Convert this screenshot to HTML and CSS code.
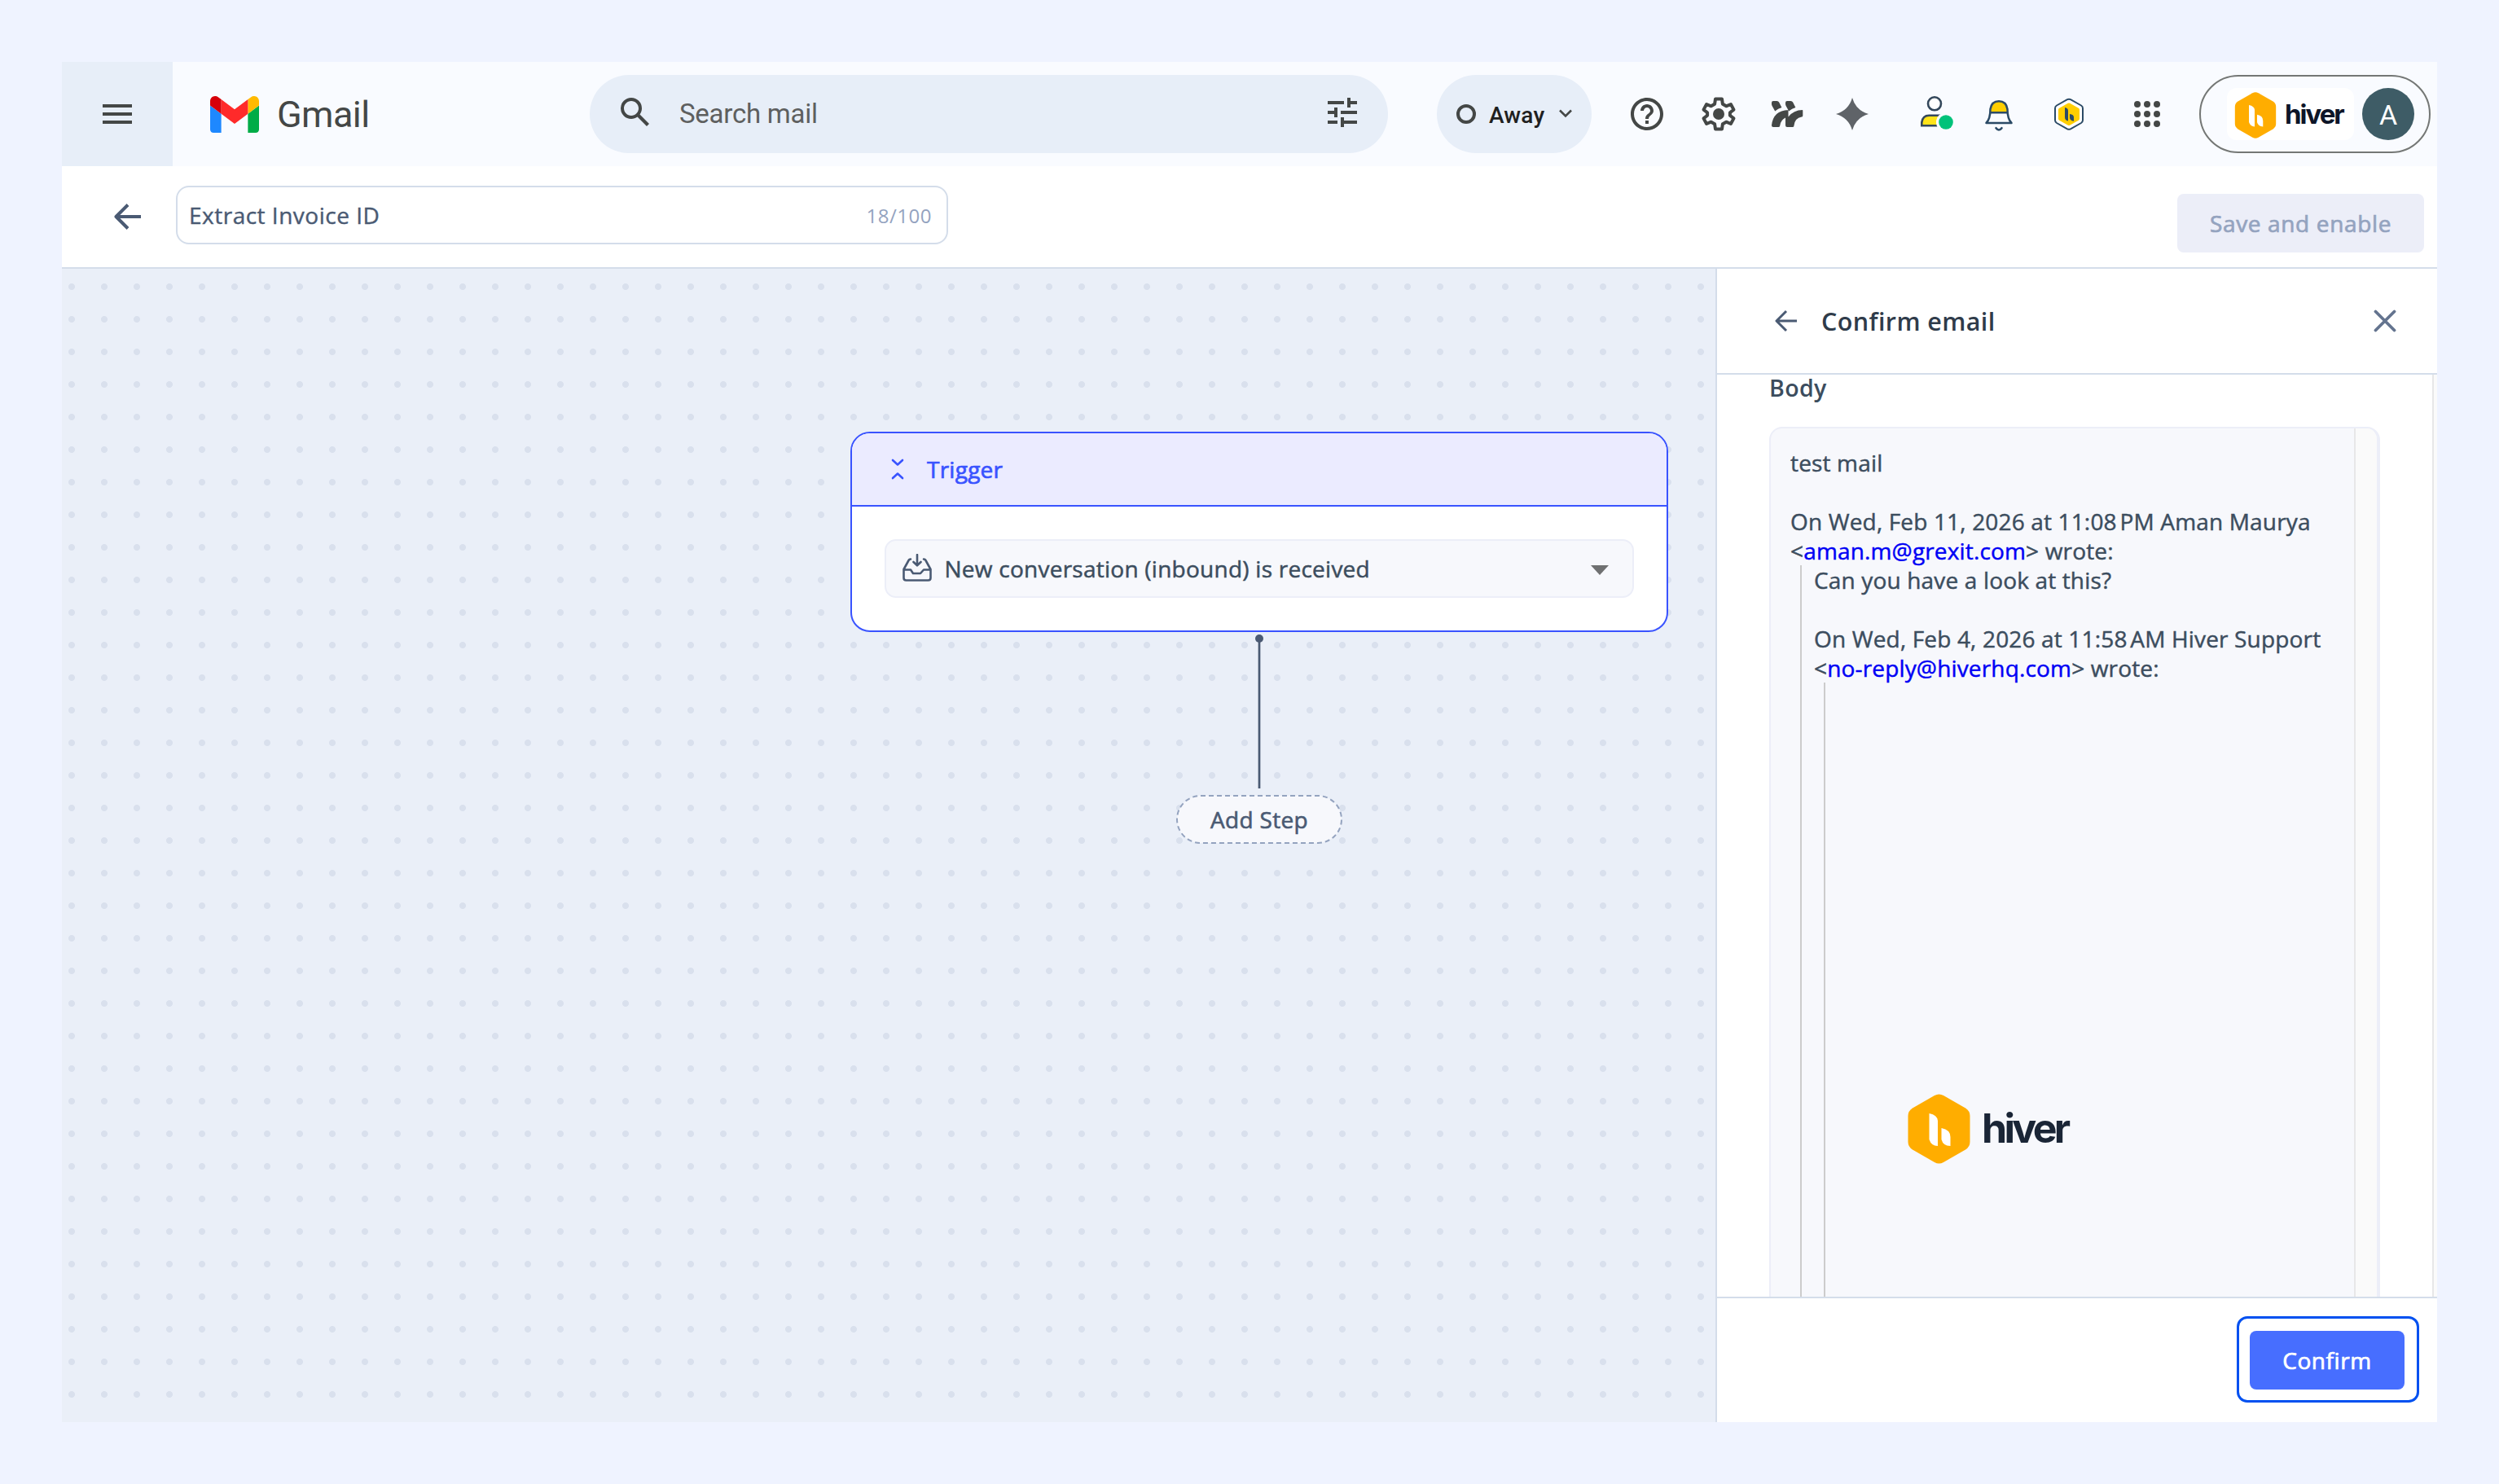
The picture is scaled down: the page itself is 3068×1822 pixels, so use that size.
FILE: index.html
```html
<!DOCTYPE html>
<html lang="en">
<head>
<meta charset="utf-8">
<title>Extract Invoice ID</title>
<link rel="stylesheet" href="styles.css">
</head>
<body>
<div class="window">
  <header class="topbar">
    <button class="menu" aria-label="Main menu"><i></i><i></i><i></i></button>
    <div class="brand">
      <svg class="brand-logo" viewBox="52 42 88 66" preserveAspectRatio="none"><path fill="#1e88ff" d="M58 108h14V74L52 59v43c0 3.32 2.69 6 6 6"/><path fill="#00ac47" d="M120 108h14c3.32 0 6-2.69 6-6V59l-20 15"/><path fill="#ffba00" d="M120 48v26l20-15v-8c0-7.42-8.47-11.65-14.4-7.2"/><path fill="#ff2a2a" d="M72 74V48l24 18 24-18v26L96 92"/><path fill="#d60009" d="M52 51v8l20 15V48l-5.6-4.2c-5.94-4.45-14.4-.22-14.4 7.2"/></svg>
      <span class="brand-name">Gmail</span>
    </div>
    <div class="search">
      <svg class="icon48" viewBox="0 0 24 24"><path d="M20.49 19l-5.73-5.73C15.53 12.2 16 10.91 16 9.5A6.5 6.5 0 1 0 9.5 16c1.41 0 2.7-.47 3.77-1.24L19 20.49 20.49 19zM5 9.5C5 7.01 7.01 5 9.5 5S14 7.01 14 9.5 11.99 14 9.5 14 5 11.99 5 9.5z"/></svg>
      <span class="search-text">Search mail</span>
      <svg class="icon48" viewBox="0 0 24 24"><path d="M3 17v2h6v-2H3zM3 5v2h10V5H3zm10 16v-2h8v-2h-8v-2h-2v6h2zM7 9v2H3v2h4v2h2V9H7zm14 4v-2H11v2h10zm-6-4h2V7h4V5h-4V3h-2v6z"/></svg>
    </div>
    <div class="status">
      <span class="status-ring"></span>
      <span class="status-text">Away</span>
      <svg class="status-caret" viewBox="0 0 18 12"><path d="M2 2.500l7 7 7-7" fill="none" stroke="#444746" stroke-width="2.600"/></svg>
    </div>
    <div class="tools">
      <svg class="icon48 help" viewBox="0 0 24 24"><path d="M11 18h2v-2h-2v2zm1-16C6.480 2 2 6.480 2 12s4.480 10 10 10 10-4.480 10-10S17.520 2 12 2zm0 18c-4.410 0-8-3.590-8-8s3.590-8 8-8 8 3.590 8 8-3.590 8-8 8zm0-14c-2.210 0-4 1.790-4 4h2c0-1.100.9-2 2-2s2 .9 2 2c0 2-3 1.750-3 5h2c0-2.250 3-2.500 3-5 0-2.210-1.790-4-4-4z"/></svg>
      <svg class="icon48 gear" viewBox="0 0 48 48"><path d="M20 5.500h8l.9 6.200 4.400 2.600 5.600-2.300 3.600 6.600-4.600 3.700v3.400l4.600 3.700-3.600 6.600-5.600-2.300-4.400 2.600-.9 6.200h-8l-.9-6.200-4.400-2.600-5.600 2.300-3.600-6.600 4.600-3.700v-3.400L5.500 18.600 9.100 12l5.600 2.300 4.400-2.600z" fill="none" stroke="#444746" stroke-width="4" stroke-linejoin="round"/><circle cx="24" cy="24" r="7"/></svg>
      <svg class="icon48 streams" viewBox="0 0 48 48"><path d="M5 10q0-2 2-2h4.500q1.800 0 2.600 1.600l3.300 6.400q-4.600 1.300-8.200 4.500L5.600 14Q5 12.800 5 11.500zM22 10q0-2 2-2h4.500q1.800 0 2.600 1.600l3.300 6.400q-4.600 1.300-8.200 4.500L22.600 14Q22 12.800 22 11.500zM5 38q2-18.500 20.500-19V27.500Q32 19 43 19q.300 0 .3 1.500v5.500q0 1.500-1.500 1.600-8.300 1.500-9.300 10.500 0 1.900-1.500 1.900h-7q-2 0-2-2v-9.500q-6 3-6.700 9.600 0 1.900-1.800 1.900H7q-2 0-2-2z"/></svg>
      <svg class="icon48 spark" viewBox="0 0 48 48"><path fill="#5f6368" d="M24 4q4.500 15.500 20 20-15.500 4.500-20 20-4.500-15.500-20-20 15.500-4.500 20-20z"/></svg>
      <svg class="icon48 person" viewBox="0 0 48 48"><circle cx="21" cy="11.300" r="8" fill="#fff" stroke="#33475b" stroke-width="2.600"/><path d="M5.300 38.300v-4q1.200-8.500 9-8.500H32v12.500z" fill="#ffe31a" stroke="#33475b" stroke-width="2.600"/><circle cx="35" cy="34" r="12" fill="#f9fbff"/><circle cx="35" cy="34" r="8.800" fill="#00c27a"/></svg>
      <svg class="icon48 bell" viewBox="0 0 48 48"><path d="M13.500 22Q13 8 24 8t10.500 14z" fill="#ffce00"/><path d="M8.500 35q5-5 5-17 1.500-9.800 10.500-9.800T34.500 18q0 12 5 17zM13.500 22.200h21" fill="none" stroke="#2b4a66" stroke-width="2.500" stroke-linejoin="round"/><path d="M20.500 41.200q3.500 4.600 7 0" fill="none" stroke="#2b4a66" stroke-width="2.600" stroke-linecap="round"/></svg>
      <svg class="icon48 hex" viewBox="0 0 48 48"><path d="M22 6.200q2-1 4 0l13 7.300q2 1.200 2 3.500v14.500q0 2.300-2 3.500L26 42.300q-2 1-4 0L9 35q-2-1.200-2-3.500V17q0-2.300 2-3.500z" fill="#fff" stroke="#2b4a66" stroke-width="2"/><path d="M22.800 10.700q1.200-.6 2.400 0l10.600 6q1.200.7 1.200 2v11q0 1.400-1.200 2l-10.600 6q-1.200.6-2.400 0l-10.600-6q-1.200-.6-1.200-2v-11q0-1.400 1.200-2z" fill="#ffce00"/><path d="M19 16q4 .5 4 4v12.500q-4-.8-4-4.500zM25 24q5 .5 5 4v4.800q-5-.8-5-4.500z" fill="#2b4a66"/></svg>
      <svg class="icon48 apps" viewBox="0 0 48 48"><g><circle cx="12" cy="12" r="4"/><circle cx="24" cy="12" r="4"/><circle cx="36" cy="12" r="4"/><circle cx="12" cy="24" r="4"/><circle cx="24" cy="24" r="4"/><circle cx="36" cy="24" r="4"/><circle cx="12" cy="36" r="4"/><circle cx="24" cy="36" r="4"/><circle cx="36" cy="36" r="4"/></g></svg>
    </div>
    <div class="account">
      <div class="org">
        <svg class="org-logo" viewBox="0 0 76 86"><path fill="#ffad00" d="M32.500 2q5.500-3 11 0l27 15.500Q76 21 76 27v32q0 6-5.500 9.500L43.500 84q-5.500 3-11 0l-27-15.500Q0 65 0 59V27q0-6 5.500-9.500z"/><path fill="#fff" d="M26 24q10 2 10.500 9v31q-8 0-10.500-8zM41 42q11 2 11 11v11q-9 0-11-8z"/></svg>
        <span class="org-name">hiver</span>
      </div>
      <span class="avatar">A</span>
    </div>
  </header>

  <div class="titlebar">
    <svg class="back" viewBox="0 0 34 34"><path d="M33 17H3M17 2.500L2.500 17 17 31.500" fill="none" stroke="#4a5a73" stroke-width="4" stroke-linejoin="round"/></svg>
    <div class="name-field"><span class="name-value">Extract Invoice ID</span><span class="name-count">18/100</span></div>
    <button class="save">Save and enable</button>
  </div>

  <div class="workspace">
    <main class="canvas">
      <section class="trigger">
        <div class="trigger-head">
          <svg class="collapse" viewBox="0 0 16 28"><path d="M2 3l6 5.500L14 3M2 25l6-5.500 6 5.500" fill="none" stroke="#3953ff" stroke-width="2.600" stroke-linecap="round" stroke-linejoin="round"/></svg>
          <span>Trigger</span>
        </div>
        <div class="trigger-body">
          <div class="select">
            <svg class="inbox" viewBox="0 0 36 34"><path d="M10 6.500Q8 6.500 7 9L1.500 19v10.500q0 3 3 3h27q3 0 3-3V19L29 9q-1-2.500-3-2.500M1.500 19.500H10l3 4.500h9l4-4.500h8.500M18 1v12M13.500 10l4.500 4.300 4.500-4.300" fill="none" stroke="#4a5a73" stroke-width="2.600" stroke-linecap="round" stroke-linejoin="round"/></svg>
            <span class="select-text">New conversation (inbound) is received</span>
            <i class="select-arrow"></i>
          </div>
        </div>
      </section>
      <svg class="connector" viewBox="0 0 12 190"><circle cx="6" cy="6" r="5" fill="#4a5a73"/><path d="M6 6v184" stroke="#4a5a73" stroke-width="2.700"/></svg>
      <button class="add-step"><svg class="add-outline" viewBox="0 0 204 60"><rect x="1" y="1" width="202" height="58" rx="29" fill="#f7f8fc" stroke="#94a3bf" stroke-width="2" stroke-dasharray="6 4"/></svg><span>Add Step</span></button>
    </main>

    <aside class="panel">
      <div class="panel-head">
        <svg class="panel-back" viewBox="0 0 28 28"><path d="M27 14H2.500M14 2L2 14l12 12" fill="none" stroke="#4a5a73" stroke-width="3" stroke-linejoin="round"/></svg>
        <h2>Confirm email</h2>
        <svg class="panel-close" viewBox="0 0 28 28"><path d="M2.500 2.500l23 23M25.500 2.500l-23 23" stroke="#64748f" stroke-width="3.800" stroke-linecap="round"/></svg>
      </div>
      <div class="panel-scroll">
        <div class="panel-content">
          <div class="label">Body</div>
          <div class="mail">
            <div class="mail-text">
              <div>test mail</div><br>
              <div>On Wed, Feb 11, 2026 at 11:08&#8239;PM Aman Maurya &lt;<a>aman.m@grexit.com</a>&gt; wrote:</div>
              <blockquote>
                <div>Can you have a look at this?</div><br>
                <div>On Wed, Feb 4, 2026 at 11:58&#8239;AM Hiver Support &lt;<a>no-reply@hiverhq.com</a>&gt; wrote:</div>
                <blockquote>
                  <div class="mail-logo">
                    <svg class="mail-hex" viewBox="0 0 76 86"><path fill="#ffad00" d="M32.500 2q5.500-3 11 0l27 15.500Q76 21 76 27v32q0 6-5.500 9.500L43.500 84q-5.500 3-11 0l-27-15.500Q0 65 0 59V27q0-6 5.500-9.500z"/><path fill="#fff" d="M26 24q10 2 10.500 9v31q-8 0-10.500-8zM41 42q11 2 11 11v11q-9 0-11-8z"/></svg>
                    <span>hiver</span>
                  </div>
                </blockquote>
              </blockquote>
            </div>
            <div class="mail-track"></div>
          </div>
        </div>
        <div class="panel-track"></div>
      </div>
      <div class="panel-foot"><div class="focus-ring"><button class="confirm">Confirm</button></div></div>
    </aside>
  </div>
</div>
</body>
</html>
```
FILE: styles.css
```css
* { box-sizing: border-box; }
body {
  margin: 0;
  padding: 76px;
  background: #eff3ff;
  font-family: "Open Sans", "Noto Sans", sans-serif;
  font-size: 28px;
  color: #3c4d5e;
}
button { border: 0; padding: 0; margin: 0; font: inherit; color: inherit; }
svg { display: block; flex: none; }
.window { width: 2916px; height: 1670px; display: flex; flex-direction: column; background: #fff; }
.icon48 { width: 48px; height: 48px; fill: #444746; }

/* Top bar */
.topbar { height: 128px; display: flex; align-items: center; background: #f9fbff; font-family: Roboto, sans-serif; }
.menu { width: 136px; height: 128px; background: #e7eef8; display: flex; flex-direction: column; align-items: center; justify-content: center; gap: 6px; }
.menu i { width: 36px; height: 4px; background: #444746; }
.brand { width: 512px; padding-left: 46px; display: flex; align-items: center; }
.brand-logo { width: 60px; height: 45px; }
.brand-name { margin-left: 22px; padding-top: 2px; font-size: 45px; line-height: 56px; color: #444746; letter-spacing: -0.6px; }
.search { width: 980px; height: 96px; padding: 0 32px; border-radius: 48px; background: #e7eef8; display: flex; align-items: center; padding-bottom: 4px; }
.search-text { flex: 1; margin-left: 30px; font-size: 33px; line-height: 40px; color: #5e5f5f; padding-top: 3px; letter-spacing: -0.25px; }
.status { width: 190px; height: 96px; margin-left: 60px; padding-left: 24px; border-radius: 48px; background: #e7eef8; display: flex; align-items: center; }
.status-ring { width: 24px; height: 24px; border: 4px solid #444746; border-radius: 50%; }
.status-text { width: 102px; padding-left: 16px; font-weight: 500; font-size: 28px; color: #1f1f1f; padding-top: 2px; letter-spacing: .2px; }
.status-caret { width: 18px; height: 12px; margin-bottom: 2px; margin-left: -1px; }
.tools { width: 746px; padding-left: 44px; display: flex; align-items: center; }
.gear { margin-left: 40px; }
.streams { margin-left: 36px; }
.spark { margin-left: 32px; }
.person { margin-left: 56px; }
.bell { margin-left: 28px; }
.hex { margin-left: 38px; }
.apps { margin-left: 48px; }
.account { width: 284px; height: 96px; padding: 0 18px 0 32px; border: 2px solid #747775; border-radius: 48px; display: flex; align-items: center; justify-content: space-between; }
.org { width: 156px; height: 64px; padding-left: 9px; border-radius: 12px; background: #fff; display: flex; align-items: center; }
.org-logo { width: 52px; height: 57px; margin-top: 2px; }
.org-name { margin-left: 10px; font: 700 33px/40px Inter, sans-serif; letter-spacing: -2px; color: #0d1528; }
.avatar { width: 64px; height: 64px; border-radius: 50%; background: #3e5c66; color: #fff; font-size: 34px; line-height: 66px; text-align: center; }

/* Name row */
.titlebar { height: 126px; padding: 0 16px 0 64px; border-bottom: 2px solid #d4ddea; display: flex; align-items: flex-start; }
.back { width: 34px; height: 34px; margin-top: 45px; }
.name-field { width: 948px; height: 72px; margin: 24px 0 0 42px; padding: 0 18px 0 14px; border: 2px solid #d4ddea; border-radius: 16px; display: flex; align-items: center; justify-content: space-between; color: #4a5a73; }
.name-value { letter-spacing: .5px; -webkit-text-stroke: .4px; }
.name-count { font-size: 24px; color: #94a3bf; letter-spacing: .5px; }
.save { width: 303px; height: 72px; margin: 34px 0 0 auto; border-radius: 8px; background: #eceef8; color: #94a3bf; letter-spacing: .65px; -webkit-text-stroke: .7px; }

/* Flow canvas */
.workspace { height: 1416px; display: flex; }
.canvas {
  width: 2030px;
  padding: 200px 58px 0 0;
  display: flex;
  flex-direction: column;
  align-items: flex-end;
  background: #eaeff8 radial-gradient(circle at 12px 22px, #d9e0ed 3.600px, #eaeff8 4.400px) 0 0 / 40px 40px;
}
.trigger { width: 1004px; height: 246px; border: 2px solid #3953ff; border-radius: 24px; overflow: hidden; background: #fff; color: #3953ff; letter-spacing: .25px; -webkit-text-stroke: .7px; }
.trigger-head { height: 90px; padding-left: 48px; border-bottom: 2px solid #3953ff; background: #ebebff; display: flex; align-items: center; gap: 28px; }
.collapse { width: 16px; height: 28px; }
.trigger-body { padding: 40px; }
.select { height: 72px; padding: 0 29px 0 20px; border: 2px solid #eceef8; border-radius: 14px; background: #f7f8fc; color: #3c4d5e; display: flex; align-items: center; -webkit-text-stroke: .5px; }
.inbox { width: 36px; height: 34px; margin-bottom: 3px; }
.select-text { flex: 1; margin-left: 15.500px; }
.select-arrow { border: 11px solid transparent; border-top: 12px solid #6f7071; border-bottom: 0; margin-top: 3px; }
.connector { width: 12px; height: 190px; margin: 2px 496px 0 0; }
.add-step { width: 204px; height: 60px; margin: 8px 400px 0 0; background: none; color: #4a5a73; display: grid; place-items: center; letter-spacing: .35px; -webkit-text-stroke: .6px; }
.add-outline, .add-step span { grid-area: 1 / 1; }
.add-outline { width: 204px; height: 60px; }

/* Confirmation panel */
.panel { width: 886px; border-left: 2px solid #d4ddea; background: #fff; display: flex; flex-direction: column; }
.panel-head { height: 130px; padding: 0 50px 0 71px; border-bottom: 2px solid #d4ddea; display: flex; align-items: center; }
.panel-back { width: 28px; height: 28px; }
.panel-head h2 { flex: 1; margin: 0 0 0 29px; font-size: 30.500px; line-height: 40px; font-weight: 600; color: #2f3b4a; letter-spacing: .4px; }
.panel-close { width: 28px; height: 28px; }
.panel-scroll { height: 1132px; display: flex; overflow: hidden; }
.panel-content { flex: 1; padding: 0 64px 0 64px; }
.label { height: 64px; line-height: 32px; font-size: 28.500px; font-weight: 600; letter-spacing: .4px; }
.mail { height: 1100px; border: 2px solid #eceef8; border-width: 2px 4px 2px 2px; border-radius: 16px; background: #f7f8fc; display: flex; overflow: hidden; }
.mail-text { flex: 1; padding: 24px 8px 0 24px; line-height: 36px; letter-spacing: .16px; -webkit-text-stroke: .45px; }
.mail-text a { color: #0000f5; }
.mail-track { width: 28px; border-left: 2px solid #e7e7e8; background: #fafafa; }
blockquote { margin: 0 0 0 12px; padding-left: 15px; border-left: 2px solid #ccc; min-height: 1000px; }
.mail-logo { padding: 505px 0 0 86px; display: flex; align-items: center; }
.mail-hex { width: 77px; height: 86px; }
.mail-logo span { margin: -3px 0 0 14px; font: 700 50px/60px Inter, sans-serif; letter-spacing: -3.700px; color: #1a2536; -webkit-text-stroke: 0; }
.panel-track { width: 6px; border-left: 2px solid #e7e7e8; background: #fafafa; }
.panel-foot { height: 154px; padding: 22px 22px 0 0; border-top: 2px solid #d4ddea; display: flex; justify-content: flex-end; }
.focus-ring { width: 224px; height: 106px; border: 3px solid #0050f0; border-radius: 13px; padding: 15px 15px 0 13px; }
.confirm { width: 190px; height: 72px; border-radius: 8px; background: #476eff; color: #fff; letter-spacing: .6px; -webkit-text-stroke: .7px; }
```
